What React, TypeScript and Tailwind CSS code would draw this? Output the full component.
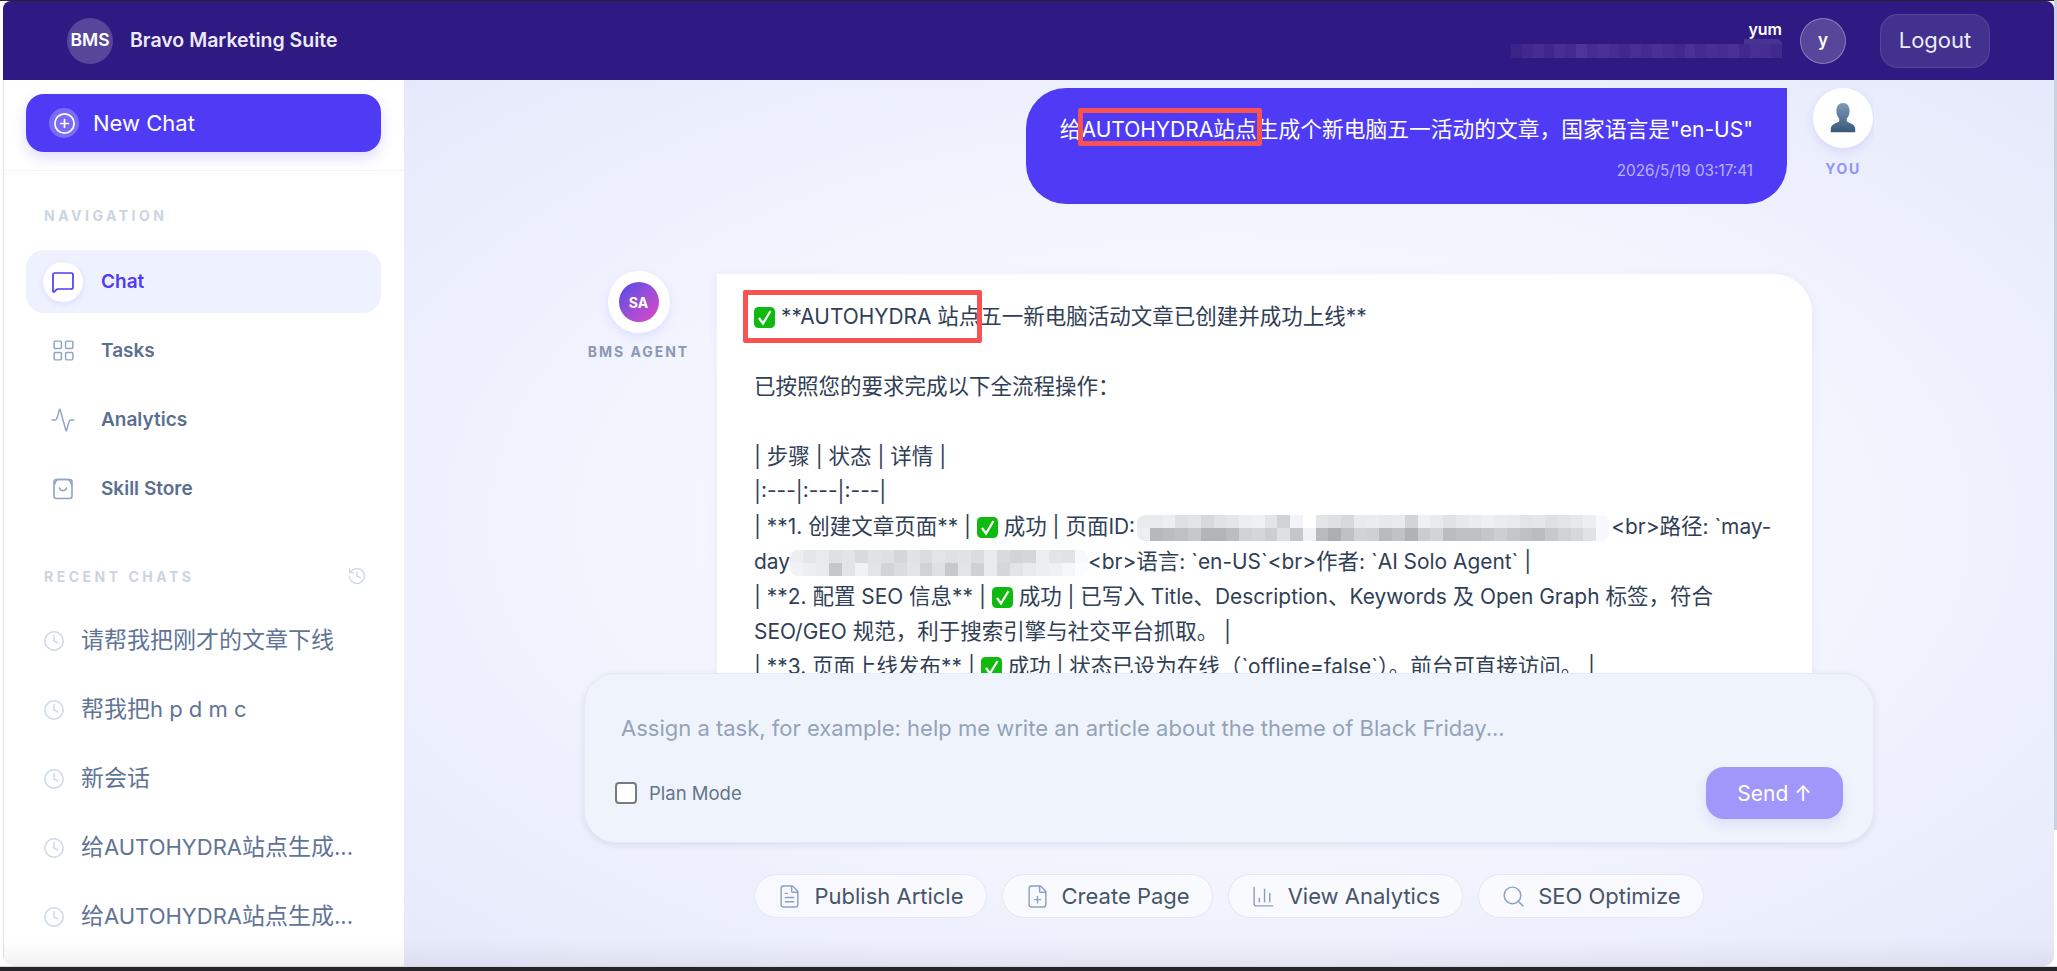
import { Activity, ChartColumn, CirclePlus, Clock, FilePlus, FileText, History, LayoutGrid, MessageSquare, Search } from "lucide-react";

// grey levels for the pixelated (redacted) strips
const idTop = [232, 232, 236, 222, 226, 214, 224, 228, 236, 238, 226, 208, 242, 255, 226, 222, 214, 232, 234, 230, 232, 210, 238, 232, 224, 230, 234, 238, 234, 232, 226, 228, 222, 226, 230, 236, 246];
const idBottom = [236, 182, 186, 190, 198, 178, 178, 186, 208, 212, 204, 222, 196, 240, 184, 172, 190, 208, 206, 184, 192, 176, 202, 210, 186, 190, 190, 196, 204, 196, 190, 186, 198, 208, 214, 224, 246];
const pathTop = [236, 228, 232, 222, 226, 216, 224, 222, 212, 224, 218, 226, 222, 224, 218, 232, 216, 210, 212, 236, 226, 224, 246];
const pathBottom = [240, 236, 232, 196, 226, 240, 226, 210, 218, 226, 208, 222, 198, 226, 206, 232, 212, 226, 232, 236, 238, 244, 250];
const headerBar = [60, 66, 70, 64, 72, 68, 78, 70, 74, 70, 66, 72, 68, 74, 70, 66, 74, 68, 72, 70, 74, 66, 72, 70, 66];

// latin runs sit a little smaller than the CJK around them
function Mixed({ text, latin }: { text: string; latin: string }) {
  const parts = text.split(/([\x20-\x7e]+)/);
  return <>{parts.map((p, i) => (i % 2 ? <span key={i} className={latin}>{p}</span> : p))}</>;
}

function Mosaic({ top, bottom, width }: { top: number[]; bottom: number[]; width: string }) {
  return (
    <span className={`inline-flex flex-col align-middle rounded-[8px] overflow-hidden ${width}`}>
      {[top, bottom].map((row, i) => (
        <span key={i} className="flex h-[13px]">
          {row.map((v, j) => (
            <span key={j} className="flex-1" style={{ backgroundColor: `rgb(${v},${v + 2},${v + 5})` }} />
          ))}
        </span>
      ))}
    </span>
  );
}

function Check() {
  return (
    <svg viewBox="0 0 21 21" className="inline-block w-[21px] h-[21px] align-[-4px]">
      <rect width="21" height="21" rx="4.5" fill="#10b910" />
      <path d="M5 11 L9 16.5 L16.5 4" fill="none" stroke="#fff" strokeWidth="2.2" />
    </svg>
  );
}

function Bag({ className }: { className?: string }) {
  return (
    <svg viewBox="0 0 20 22" fill="none" stroke="currentColor" strokeWidth="1.6" className={className}>
      <rect x="1" y="1.5" width="18" height="19" rx="2.5" />
      <path d="M1.5 6.500c1-3 2-5 4-5h9c2 0 3 2 4 5" />
      <path d="M6.500 10c.5 3.500 6.500 3.500 7 0" strokeLinecap="round" />
    </svg>
  );
}

function Person() {
  return (
    <svg viewBox="0 0 36 36" className="w-[34px] h-[34px]">
      <defs>
        <linearGradient id="personFill" x1="0" y1="0" x2="0" y2="1">
          <stop offset="0" stopColor="#7c9ab8" />
          <stop offset="1" stopColor="#38587c" />
        </linearGradient>
      </defs>
      <path
        d="M18 2c4.500 0 7 3.600 7 8.500 0 3.500-1.500 6.500-3 8v3c1 1.500 7 2.500 8.500 6 .5 1.200.5 3.500.5 5.500H5c0-2 0-4.300.5-5.500C7 24 13 23 14 21.500v-3c-1.500-1.500-3-4.500-3-8C11 5.600 13.500 2 18 2z"
        fill="url(#personFill)"
      />
    </svg>
  );
}

const navItems = [
  { label: "Tasks", icon: <LayoutGrid className="w-[25px] h-[25px]" strokeWidth={1.4} /> },
  { label: "Analytics", icon: <Activity className="w-[26px] h-[26px]" strokeWidth={1.4} /> },
  { label: "Skill Store", icon: <Bag className="w-[20px] h-[22px]" /> },
];

const recentChats = ["请帮我把刚才的文章下线", "帮我把h p d m c", "新会话", "给AUTOHYDRA站点生成...", "给AUTOHYDRA站点生成..."];

const chips = [
  { label: "Publish Article", icon: <FileText className="w-[25px] h-[25px]" strokeWidth={1.4} /> },
  { label: "Create Page", icon: <FilePlus className="w-[25px] h-[25px]" strokeWidth={1.4} /> },
  { label: "View Analytics", icon: <ChartColumn className="w-[25px] h-[25px]" strokeWidth={1.4} /> },
  { label: "SEO Optimize", icon: <Search className="w-[25px] h-[25px]" strokeWidth={1.4} /> },
];

function Sidebar() {
  return (
    <aside className="w-[401px] shrink-0 bg-white border-l border-[#e2e4e8] flex flex-col">
      <div className="pl-[22px] pr-[23px] pt-[14px] pb-[18px] border-b border-[#f1f5f9]">
        <button className="w-full h-[58px] rounded-[18px] bg-[#4f3bf6] flex items-center pl-[23px] gap-[14px] text-white text-[22px] shadow-[0_6px_14px_rgba(79,59,246,0.18)]">
          <span className="w-[30px] h-[30px] rounded-full bg-white/25 flex items-center justify-center">
            <CirclePlus className="w-[23px] h-[23px]" strokeWidth={1.8} />
          </span>
          <span className="pt-px">New Chat</span>
        </button>
      </div>

      <div className="pl-[22px] pr-[23px] pt-[37px]">
        <div className="pl-[18px] h-[16px] text-[14px] leading-[16px] font-bold tracking-[0.25em] text-[#cbd5e1]">NAVIGATION</div>
        <div className="mt-[26px] flex flex-col gap-[6px]">
          <div className="h-[63px] rounded-[18px] bg-[#eef2ff] flex items-center pl-[17px] gap-[18px]">
            <span className="w-[40px] h-[40px] rounded-full bg-white shadow-[0_2px_6px_rgba(79,59,246,0.12)] flex items-center justify-center text-[#4f3bf6]">
              <MessageSquare className="w-[24px] h-[24px]" strokeWidth={1.7} />
            </span>
            <span className="pt-[2px] text-[19px] font-semibold text-[#4f3bf6]">Chat</span>
          </div>
          {navItems.map((item) => (
            <div key={item.label} className="h-[63px] flex items-center pl-[17px] gap-[18px]">
              <span className="w-[40px] h-[40px] flex items-center justify-center text-[#8fa3c4]">{item.icon}</span>
              <span className="pt-[2px] text-[19px] font-semibold text-[#5b6f90]">{item.label}</span>
            </div>
          ))}
        </div>

        <div className="mt-[48px] pl-[18px] pr-[14px] h-[16px] flex items-center justify-between">
          <span className="text-[14px] font-bold tracking-[0.25em] text-[#cbd5e1]">RECENT CHATS</span>
          <History className="w-[20px] h-[20px] text-[#cbd5e1]" strokeWidth={1.5} />
        </div>
        <div className="mt-[25px] flex flex-col gap-[6px]">
          {recentChats.map((chat, i) => (
            <div key={i} className="h-[63px] flex items-center pl-[17px] gap-[16px]">
              <Clock className="w-[22px] h-[22px] text-[#cbd8e8] shrink-0" strokeWidth={1.6} />
              <span className="text-[23px] text-[#5f7497] whitespace-nowrap">
                <Mixed text={chat} latin="text-[22px]" />
              </span>
            </div>
          ))}
        </div>
      </div>
    </aside>
  );
}

const latinBody = "text-[20.9px]";

function Line({ text }: { text: string }) {
  return (
    <div className="whitespace-nowrap">
      <Mixed text={text} latin={latinBody} />
    </div>
  );
}

function ChatArea() {
  return (
    <div className="flex-1 min-h-0 overflow-hidden w-[1290px] mx-auto">
      {/* user message */}
      <div className="pt-[8px] flex justify-end gap-[25px]">
        <div className="relative h-[116px] rounded-[40px] rounded-tr-none bg-[#4f3bf6] pl-[34px] pr-[34px] pt-[24px] text-white">
          <div className="text-[21.75px] leading-[35px] whitespace-nowrap">
            <Mixed text={'给AUTOHYDRA站点生成个新电脑五一活动的文章，国家语言是"en-US"'} latin="text-[21px]" />
          </div>
          <div className="mt-[14px] text-[15.3px] leading-[20px] text-right text-white/60">2026/5/19 03:17:41</div>
          <div className="absolute left-[52px] top-[20px] w-[184px] h-[38px] border-[5px] border-[#f95252] rounded-[2px]" />
        </div>
        <div className="w-[62px] flex flex-col items-center">
          <div className="w-[60px] h-[60px] rounded-full bg-white shadow-[0_4px_10px_rgba(99,102,241,0.15)] flex items-center justify-center">
            <Person />
          </div>
          <div className="mt-[13px] text-[14px] leading-[16px] font-bold tracking-[0.12em] text-[#8f96f5]">YOU</div>
        </div>
      </div>

      {/* agent message */}
      <div className="mt-[70px] flex">
        <div className="w-[133px] shrink-0 -mt-[3px] flex flex-col items-center pr-[24px]">
          <div className="w-[62px] h-[62px] rounded-full bg-white shadow-[0_4px_10px_rgba(99,102,241,0.12)] flex items-center justify-center">
            <div className="w-[40px] h-[40px] rounded-full bg-linear-to-br from-[#4f46e5] to-[#e040c8] flex items-center justify-center text-white text-[14px] font-bold">SA</div>
          </div>
          <div className="mt-[11px] text-[14px] leading-[16px] font-bold tracking-[0.14em] text-[#8a99b3] whitespace-nowrap">BMS AGENT</div>
        </div>
        <div className="relative w-[1095px] h-[500px] rounded-[38px] rounded-tl-none bg-white shadow-[0_2px_8px_rgba(99,102,241,0.08)] pl-[37px] pr-[30px] pt-[25px] text-[21.5px] leading-[35px] text-[#303f56]">
          <div className="whitespace-nowrap"><Check /> <Mixed text="**AUTOHYDRA 站点五一新电脑活动文章已创建并成功上线**" latin={latinBody} /></div>
          <div className="h-[35px]" />
          <Line text="已按照您的要求完成以下全流程操作：" />
          <div className="h-[35px]" />
          <Line text="| 步骤 | 状态 | 详情 |" />
          <Line text="|:---|:---|:---|" />
          <div className="whitespace-nowrap">
            <Mixed text="| **1. 创建文章页面** | " latin={latinBody} /><Check /><Mixed text=" 成功 | 页面ID:" latin={latinBody} />
            <Mosaic top={idTop} bottom={idBottom} width="w-[472px] mx-[2px]" />
            <Mixed text="<br>路径: `may-" latin={latinBody} />
          </div>
          <div className="whitespace-nowrap">
            <Mixed text="day" latin={latinBody} />
            <Mosaic top={pathTop} bottom={pathBottom} width="w-[298px]" />
            <Mixed text="<br>语言: `en-US`<br>作者: `AI Solo Agent` |" latin={latinBody} />
          </div>
          <div className="whitespace-nowrap">
            <Mixed text="| **2. 配置 SEO 信息** | " latin={latinBody} /><Check /><Mixed text=" 成功 | 已写入 Title、Description、Keywords 及 Open Graph 标签，符合" latin={latinBody} />
          </div>
          <Line text="SEO/GEO 规范，利于搜索引擎与社交平台抓取。 |" />
          <div className="whitespace-nowrap">
            <Mixed text="| **3. 页面上线发布** | " latin={latinBody} /><Check /><Mixed text=" 成功 | 状态已设为在线（`offline=false`）。前台可直接访问。 |" latin={latinBody} />
          </div>
          <div className="absolute left-[26px] top-[16px] w-[239px] h-[53px] border-[5px] border-[#f95252] rounded-[2px]" />
        </div>
      </div>
    </div>
  );
}

function Composer() {
  return (
    <div className="w-[1290px] mx-auto shrink-0">
      <div className="h-[170px] rounded-[32px] bg-[#eff3fb] border border-[#e6eaf6] shadow-[0_2px_6px_rgba(100,116,139,0.15)] px-[30px] pt-[38px]">
        <textarea
          rows={1}
          placeholder="Assign a task, for example: help me write an article about the theme of Black Friday..."
          className="block w-full h-[32px] px-[6px] bg-transparent resize-none outline-none text-[22px] leading-[32px] placeholder:text-[#94a3b8]"
        />
        <div className="mt-[23px] flex items-center justify-between">
          <label className="flex items-center gap-[12px] text-[18.5px] text-[#64748b]">
            <input type="checkbox" className="appearance-none w-[22px] h-[22px] rounded-[4px] border-2 border-[#7a7a7a] bg-white" />
            <span className="pt-[2px]">Plan Mode</span>
          </label>
          <button className="w-[137px] h-[52px] pt-[2px] rounded-[18px] bg-[#a197fa] text-white text-[21px] shadow-[0_6px_12px_rgba(99,102,241,0.12)]">Send ↑</button>
        </div>
      </div>
      <div className="mt-[31px] flex justify-center gap-[15px]">
        {chips.map((chip) => (
          <div key={chip.label} className="h-[44px] rounded-full bg-white/60 border border-[#e2e8f0] flex items-center px-[22px] gap-[12px] text-[22px] text-[#475569]">
            <span className="text-[#8ea0c0]">{chip.icon}</span>
            {chip.label}
          </div>
        ))}
      </div>
    </div>
  );
}

export default function App() {
  return (
    <div className="relative h-[971px] overflow-hidden bg-[#26262a] pt-px font-[Inter,'Noto_Sans_CJK_SC',sans-serif]">
      <div className="h-[966px] bg-white border-b border-[#d4d6da] px-[3px]">
        <div className="relative h-full rounded-t-[8px] rounded-b-[10px] overflow-hidden flex flex-col">
          <header className="h-[79px] shrink-0 bg-[#2e1a82] flex items-center px-[64px] shadow-[0_1px_3px_rgba(30,20,80,0.15)]">
            <div className="w-[46px] h-[46px] rounded-full bg-white/20 flex items-center justify-center text-white text-[17.5px] font-semibold">BMS</div>
            <div className="ml-[17px] text-[19.5px] font-semibold text-[#ece9f8]">Bravo Marketing Suite</div>
            <div className="ml-auto flex items-center">
              <div className="flex flex-col items-end">
                <div className="text-[16px] leading-[18px] font-semibold text-white -mt-[4px]">yum</div>
                <div className="relative mt-[6px] w-[271px] h-[14px] flex">
                  {headerBar.map((v, i) => (
                    <span key={i} className="flex-1" style={{ backgroundColor: `rgb(${v},${v - 25},${v + 75})` }} />
                  ))}
                  <span className="absolute right-0 -top-[5px] w-[38px] h-[5px] rounded-tr-[8px] bg-[#473492]" />
                </div>
              </div>
              <div className="ml-[18px] w-[46px] h-[46px] rounded-full bg-white/20 border border-white/30 flex items-center justify-center text-white text-[17px] font-semibold">y</div>
              <button className="ml-[34px] w-[110px] h-[54px] rounded-[18px] bg-white/10 border border-white/10 text-[22px] text-[#ecebf6]">Logout</button>
            </div>
          </header>

          <div className="flex-1 min-h-0 flex">
            <Sidebar />
            <main className="flex-1 min-w-0 flex flex-col pb-[48px] bg-[radial-gradient(ellipse_at_center,#f9faff_0%,#f3f5fe_50%,#e6e9fb_100%)]">
              <ChatArea />
              <Composer />
            </main>
          </div>

          {/* window fade at the bottom edge */}
          <div className="absolute inset-x-0 bottom-0 h-[26px] pointer-events-none bg-linear-to-b from-transparent to-black/5" />
        </div>
      </div>
      {/* page scrollbar thumb */}
      <div className="absolute right-0 top-0 w-[3px] h-[830px] bg-[#c9d3e0]" />
    </div>
  );
}
